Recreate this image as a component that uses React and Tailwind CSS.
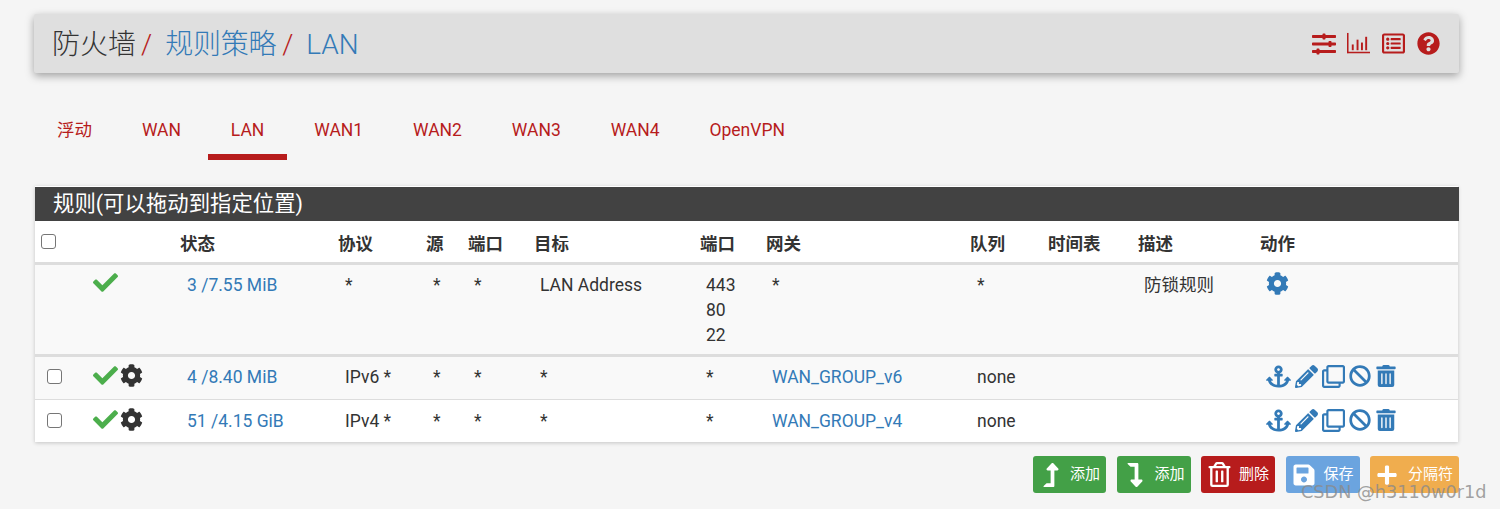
import React from "react";
import { FaCheck, FaCog, FaAnchor, FaPencilAlt, FaRegClone, FaBan, FaTrashAlt, FaRegTrashAlt, FaQuestionCircle, FaSlidersH, FaRegListAlt, FaSave, FaPlus, FaLevelUpAlt, FaLevelDownAlt } from "react-icons/fa";

const Bars = (p) => (
  <svg viewBox="0 0 24 24" width="23" height="23" fill="currentColor" {...p}>
    <rect x="0" y="1" width="1.6" height="21" />
    <rect x="0" y="20.6" width="24" height="1.6" />
    <rect x="5" y="13" width="2" height="6" />
    <rect x="10" y="8" width="2" height="11" />
    <rect x="14.6" y="11" width="2" height="8" />
    <rect x="19" y="5" width="2" height="14" />
  </svg>
);

const tabs = ["浮动", "WAN", "LAN", "WAN1", "WAN2", "WAN3", "WAN4", "OpenVPN"];
const heads = ["", "", "状态", "协议", "源", "端口", "目标", "端口", "网关", "队列", "时间表", "描述", "动作"];
const colw = [46, 94, 158, 88, 41, 66, 166, 66, 205, 77, 90, 122, 204];

const Box = () => (
  <span className="block w-[15px] h-[15px] rounded-[3px] border border-[#767676] bg-white" />
);

function Actions() {
  return (
    <div className="flex items-center gap-[4px] text-[#337ab7] -mt-[1px]">
      <FaAnchor size={25} />
      <FaPencilAlt size={23} />
      <FaRegClone size={23} />
      <FaBan size={22} />
      <FaTrashAlt size={22} />
    </div>
  );
}

function Row({ check, gear, state, proto, ports, gw, queue, desc, gearAction, bg, border, pad }) {
  const td = `pl-3 ${pad} align-top`;
  return (
    <tr className={`${bg} ${border}`}>
      <td className={td}>{check && <span className="block mt-[4px]"><Box /></span>}</td>
      <td className={td}>
        <div className={`flex items-center gap-[2px] ${gearAction ? "-mt-[3px]" : "-mt-[2px]"}`}>
          <FaCheck size={25} className="text-[#4cae4c]" />
          {gear && <FaCog size={23} className="text-[#333]" />}
        </div>
      </td>
      <td className={td}><span className="text-[#337ab7]">{state}</span></td>
      <td className={td}>{proto}</td>
      <td className={td}>*</td>
      <td className={td}>*</td>
      <td className={td}>{gearAction ? "LAN Address" : "*"}</td>
      <td className={td}>{ports.map((p) => <div key={p}>{p}</div>)}</td>
      <td className={td}><span className={gearAction ? "" : "text-[#337ab7]"}>{gw}</span></td>
      <td className={td}>{queue}</td>
      <td className={td}></td>
      <td className={td}>{desc}</td>
      <td className={td}>{gearAction ? <FaCog size={23} className="text-[#337ab7] -mt-[1px]" /> : <Actions />}</td>
    </tr>
  );
}

function Btn({ color, icon, label, w }) {
  return (
    <div className={`${color} ${w} h-[37px] rounded-[3px] flex items-center justify-between pl-1.5 pr-1.5 text-white text-[15px]`}>
      {icon}
      <span>{label}</span>
    </div>
  );
}

export default function App() {
  return (
    <div className="relative w-[1500px] h-[509px] overflow-hidden bg-[#f5f5f5] text-[#333] text-[17.5px] leading-[25px] px-[34px] pt-[14px]" style={{ fontFamily: "Roboto, 'Noto Sans CJK SC', sans-serif" }}>
      <div className="h-[59px] w-[1425px] bg-[#dfdfdf] shadow-[0_3px_8px_rgba(0,0,0,0.35)] rounded-[2px] flex items-center justify-between pl-[18px] pr-[19px]">
        <div className="flex items-center text-[28px] leading-[40px] font-light pt-[2px]">
          <span>防火墙</span>
          <span className="text-[#b71c1c] ml-[5px]">/</span>
          <span className="text-[#337ab7] ml-[13px] tracking-[-0.25px]">规则策略</span>
          <span className="text-[#b71c1c] ml-[6px]">/</span>
          <span className="text-[#337ab7] ml-[13px]">LAN</span>
        </div>
        <div className="flex items-center text-[#b71c1c]">
          <FaSlidersH size={24} className="mr-[11px]" />
          <Bars className="mr-[12px]" />
          <FaRegListAlt size={23} className="mr-[12px]" />
          <FaQuestionCircle size={23} />
        </div>
      </div>

      <div className="flex gap-[3.9px] mt-[30px] h-[57px] text-[#b71c1c]">
        {tabs.map((t) => (
          <div key={t} className={`px-[23px] pt-[15px] whitespace-nowrap h-[57px] ${t === "LAN" ? "border-b-[6px] border-[#b71c1c]" : ""}`}>{t}</div>
        ))}
      </div>

      <div className="mt-[26px] w-[1423px] ml-px pt-px bg-white shadow-[0_1px_4px_rgba(0,0,0,0.2)]">
        <div className="h-[34px] w-[1424px] bg-[#424242] text-white text-[21.4px] leading-[34px] pl-[18px]">规则(可以拖动到指定位置)</div>
        <table className="table-fixed w-[1423px] border-collapse">
          <colgroup>
            {colw.map((w, i) => <col key={i} style={{ width: w }} />)}
          </colgroup>
          <thead>
            <tr className="h-[42px] border-b-[3px] border-[#dddddd]">
              {heads.map((h, i) => (
                <th key={i} className={`text-left font-bold whitespace-nowrap align-middle ${i === 0 ? "pl-1.5" : "pt-[6px]"} ${[2, 3, 4, 9].includes(i) ? "pl-[5px]" : "pl-1.5"}`}>
                  {i === 0 ? <Box /> : h}
                </th>
              ))}
            </tr>
          </thead>
          <tbody>
            <Row pad="pt-[8px]" bg="bg-[#f9f9f9]" border="h-[92px] border-b-[3px] border-[#dddddd]" state="3 /7.55 MiB" proto="*" ports={["443", "80", "22"]} gw="*" queue="*" desc="防锁规则" gearAction />
            <Row pad="pt-[8px]" bg="bg-[#f9f9f9]" border="h-[44px] border-b border-[#dddddd]" check gear state="4 /8.40 MiB" proto="IPv6 *" ports={["*"]} gw="WAN_GROUP_v6" queue="none" />
            <Row pad="pt-[9px]" bg="bg-white" border="h-[43px]" check gear state="51 /4.15 GiB" proto="IPv4 *" ports={["*"]} gw="WAN_GROUP_v4" queue="none" />
          </tbody>
        </table>
      </div>

      <div className="flex justify-end gap-[10.5px] w-[1425px] mt-[14px]">
        <Btn w="w-[73px]" color="bg-[#43a047]" icon={<FaLevelUpAlt size={24} />} label="添加" />
        <Btn w="w-[74px]" color="bg-[#43a047]" icon={<FaLevelDownAlt size={24} />} label="添加" />
        <Btn w="w-[74px]" color="bg-[#b71c1c]" icon={<FaRegTrashAlt size={25} />} label="删除" />
        <Btn w="w-[74px]" color="bg-[#6ba4df]" icon={<FaSave size={24} />} label="保存" />
        <Btn w="w-[89px]" color="bg-[#f0ad4e]" icon={<FaPlus size={22} />} label="分隔符" />
      </div>

      <div className="absolute left-[1301px] top-[480px] leading-[25px] text-[#8a8a8a]/80 text-[17.7px]" style={{ fontFamily: "'DejaVu Sans', sans-serif" }}>CSDN @h3110w0r1d</div>
    </div>
  );
}
